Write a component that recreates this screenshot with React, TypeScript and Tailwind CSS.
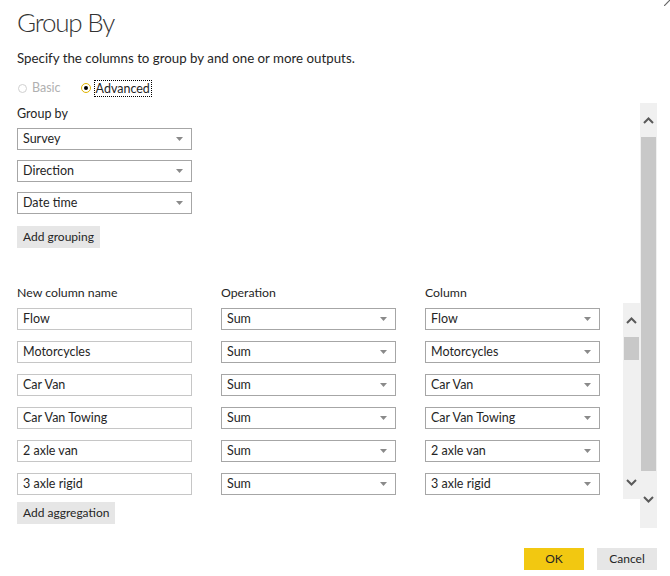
import React from 'react'

const font = { fontFamily: 'Lato, "Open Sans", Arial, sans-serif' }

function Caret() {
  return (
    <svg width="7" height="4" viewBox="0 0 7 4" className="shrink-0">
      <path d="M0 0h7L3.5 4z" fill="#8a8a8a" />
    </svg>
  )
}

function Select({ value }: { value: string }) {
  return (
    <div className="w-[175px] h-[22px] border border-[#a6a6a6] bg-white flex items-center justify-between pl-[5px] pr-[8px] text-[12.5px] text-[#252525]">
      <span>{value}</span>
      <Caret />
    </div>
  )
}

function TextBox({ value }: { value: string }) {
  return (
    <div className="w-[175px] h-[22px] border border-[#c6c6c6] bg-white flex items-center pl-[5px] text-[12.5px] text-[#252525]">
      {value}
    </div>
  )
}

function Chevron({ up }: { up?: boolean }) {
  return (
    <svg width="11" height="7" viewBox="0 0 11 7">
      <path d={up ? 'M1 6L5.5 1.5L10 6' : 'M1 1L5.5 5.5L10 1'} fill="none" stroke="#5a5a5a" strokeWidth="2" />
    </svg>
  )
}

const rows = ['Flow', 'Motorcycles', 'Car Van', 'Car Van Towing', '2 axle van', '3 axle rigid']

export default function App() {
  return (
    <div className="w-[670px] h-[576px] bg-white relative overflow-hidden text-[#333]" style={font}>
      <svg className="absolute right-0 top-0" width="6" height="6" viewBox="0 0 6 6">
        <path d="M0 6L6 0" stroke="#666" strokeWidth="1.2" />
      </svg>

      <div className="pl-[17px] pt-[4px]">
        <h1 className="text-[26px] font-light tracking-[-1.2px] text-[#333] leading-[36px]">Group By</h1>
        <p className="mt-[9px] text-[13.3px] text-[#252525] leading-[18px]">
          Specify the columns to group by and one or more outputs.
        </p>
        <div className="mt-[12px] flex items-center h-[18px] text-[12.5px]">
          <span className="flex items-center gap-[5px] text-[#b0b0b0] ml-px">
            <span className="w-[9px] h-[9px] rounded-full border border-[#d0d0d0]" />
            Basic
          </span>
          <span className="flex items-center ml-[20px]">
            <span className="w-[10px] h-[10px] rounded-full border border-[#e0b400] flex items-center justify-center">
              <span className="w-[4px] h-[4px] rounded-full bg-black" />
            </span>
            <span className="ml-[3px] px-px border border-dotted border-black text-[#252525] leading-[15px]">Advanced</span>
          </span>
        </div>
      </div>

      <div className="mt-[6px] flex h-[425px]">
        <div className="flex-1 pl-[17px]">
          <div className="pt-[2px] text-[12.5px] leading-[18px] text-[#252525]">Group by</div>
          <div className="mt-[5px] flex flex-col gap-[10px]">
            <Select value="Survey" />
            <Select value="Direction" />
            <Select value="Date time" />
          </div>
          <button className="mt-[12px] h-[22px] px-[6px] bg-[#e6e6e6] text-[12px] text-[#252525]">Add grouping</button>

          <div className="mt-[36px] flex text-[12.3px] text-[#252525] leading-[18px]">
            <span className="w-[204px]">New column name</span>
            <span className="w-[204px]">Operation</span>
            <span>Column</span>
          </div>
          <div className="mt-[1px] flex h-[196px]">
            <div className="flex-1 pt-[5px] flex flex-col gap-[11px]">
              {rows.map((r) => (
                <div key={r} className="flex gap-[29px]">
                  <TextBox value={r} />
                  <Select value="Sum" />
                  <Select value={r} />
                </div>
              ))}
            </div>
            <div className="w-[17px] bg-[#f0f0f0] flex flex-col items-center">
              <div className="h-[34px] flex items-center justify-center">
                <Chevron up />
              </div>
              <div className="w-[15px] h-[23px] bg-[#c8c8c8]" />
              <div className="flex-1" />
              <div className="h-[34px] flex items-center justify-center">
                <Chevron />
              </div>
            </div>
          </div>
          <button className="mt-px h-[22px] px-[6px] bg-[#e6e6e6] text-[12px] text-[#252525]">Add aggregation</button>
        </div>

        <div className="w-[17px] mr-[13px] bg-[#f0f0f0] flex flex-col items-center">
          <div className="h-[34px] flex items-center justify-center">
            <Chevron up />
          </div>
          <div className="w-[15px] h-[334px] bg-[#c8c8c8]" />
          <div className="flex-1 flex items-center justify-center">
            <Chevron />
          </div>
        </div>
      </div>

      <div className="mt-[20px] flex justify-end gap-[13px] pr-[13px] text-[12px] text-[#252525]">
        <button className="w-[60px] h-[22px] bg-[#f2c811]">OK</button>
        <button className="w-[60px] h-[22px] bg-[#e6e6e6]">Cancel</button>
      </div>
    </div>
  )
}
